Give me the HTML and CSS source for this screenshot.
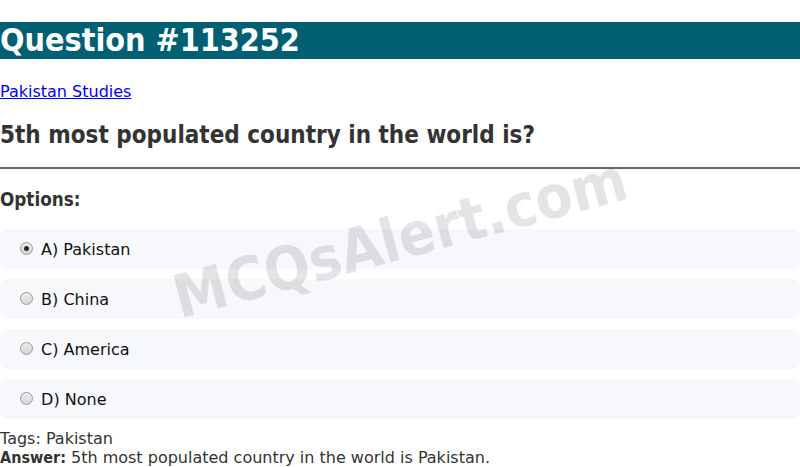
FILE: index.html
```html
<!DOCTYPE html>
<html>
<head>
<meta charset="utf-8">
<link rel="stylesheet" href="styles.css">
</head>
<body>
<h1 class="title">Question #113252</h1>
<p class="cat"><a href="#">Pakistan Studies</a></p>
<h2 class="question">5th most populated country in the world is?</h2>
<hr class="divider">
<h3 class="opt-head">Options:</h3>
<div class="options">
  <label class="option"><input type="radio" name="q" checked> A) Pakistan</label>
  <label class="option"><input type="radio" name="q"> B) China</label>
  <label class="option"><input type="radio" name="q"> C) America</label>
  <label class="option"><input type="radio" name="q"> D) None</label>
</div>
<div class="meta">Tags: Pakistan</div>
<div class="meta"><strong class="strong">Answer:</strong> 5th most populated country in the world is Pakistan.</div>
<div class="watermark">MCQsAlert.com</div>
</body>
</html>
```
FILE: styles.css
```css
html, body {
  margin: 0;
  padding: 0;
}
body {
  font-family: "DejaVu Sans", Verdana, sans-serif;
  color: #333;
  background: #fff;
  position: relative;
  overflow: hidden;
  height: 467px;
}
.title, .question, .opt-head, .strong, .watermark {
  font-family: "DejaVu Sans Condensed", "DejaVu Sans", sans-serif;
  font-weight: bold;
}
.title {
  font-size: 32px;
  line-height: 37px;
  margin: 21.5px 0;
  background: #005f73;
  color: #fff;
}
.cat {
  margin: 23.5px 0 16px;
  font-size: 16px;
}
.cat a {
  color: #0000ee;
}
.question {
  font-size: 24px;
  line-height: 28px;
  margin: 20px 0 18px;
  color: #333;
}
.divider {
  border: none;
  border-top: 2px solid #666;
  margin: 0;
  height: 0;
}
.opt-head {
  font-size: 18.72px;
  margin: 19.7px 0 19.7px;
  color: #333;
}
.options {
  display: flex;
  flex-direction: column;
  gap: 10.6px;
  margin-bottom: 10.6px;
}
.option {
  display: block;
  background: #f7f8fc;
  border-radius: 8px;
  padding: 11px 15px 9px;
  line-height: 19.4px;
  font-size: 16px;
  color: #111;
}
.option input {
  appearance: none;
  -webkit-appearance: none;
  box-sizing: border-box;
  margin: 0 3px 0 5px;
  width: 13px;
  height: 13px;
  border-radius: 50%;
  border: 1px solid #9a9a9a;
  background: linear-gradient(#ececec, #d6d6d6);
  vertical-align: 0;
  position: relative;
}
.option input:checked::after {
  content: "";
  position: absolute;
  left: 3px;
  top: 3px;
  width: 5px;
  height: 5px;
  border-radius: 50%;
  background: #2a2a2a;
}
.meta {
  font-size: 16px;
  line-height: 19px;
  color: #333;
}
.watermark {
  position: absolute;
  left: 50%;
  top: 238px;
  transform: translate(-50%, -50%) rotate(-15deg);
  font-size: 60px;
  color: rgba(0, 0, 0, 0.105);
  white-space: nowrap;
  pointer-events: none;
}
```
